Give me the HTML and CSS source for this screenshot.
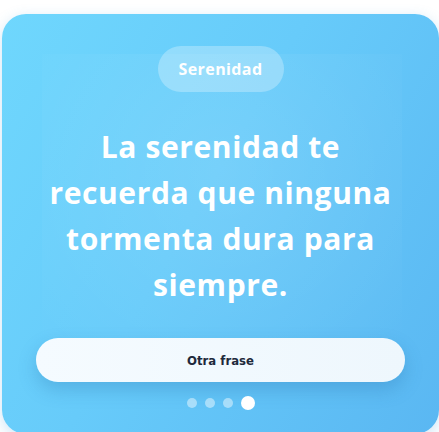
FILE: index.html
```html
<!DOCTYPE html>
<html lang="es">
<head>
<meta charset="utf-8">
<title>Serenidad</title>
<link rel="stylesheet" href="styles.css">
</head>
<body>
<main class="card">
  <div class="glow"></div>
  <span class="tag">Serenidad</span>
  <p class="quote">La serenidad te recuerda que ninguna tormenta dura para siempre.</p>
  <button class="next" type="button">Otra frase</button>
  <div class="dots">
    <span class="dot"></span>
    <span class="dot"></span>
    <span class="dot"></span>
    <span class="dot active"></span>
  </div>
</main>
</body>
</html>
```
FILE: styles.css
```css
html, body {
  margin: 0;
  padding: 0;
  background: #ffffff;
}
body {
  overflow: hidden;
  height: 432px;
}
.card {
  position: relative;
  box-sizing: border-box;
  margin: 14px 0 0 2px;
  width: 437px;
  height: 420px;
  border-radius: 24px;
  background: linear-gradient(120deg, #6fd7fd 0%, #67cbfa 45%, #5ab7f2 100%);
  box-shadow: 0 4px 14px rgba(60, 150, 220, 0.25);
  display: flex;
  flex-direction: column;
  align-items: center;
  padding-top: 32px;
  overflow: hidden;
}
.glow {
  position: absolute;
  left: 40px;
  top: 40px;
  width: 360px;
  height: 290px;
  background: radial-gradient(ellipse at 50% 40%, rgba(255,255,255,0.10), rgba(255,255,255,0.03) 70%, rgba(255,255,255,0) 100%);
  pointer-events: none;
}
.tag {
  position: relative;
  display: flex;
  align-items: center;
  justify-content: center;
  width: 126px;
  height: 46px;
  border-radius: 23px;
  background: rgba(255, 255, 255, 0.28);
  color: #ffffff;
  font-family: "Open Sans", "Noto Sans", sans-serif;
  font-weight: 700;
  font-size: 16px;
  letter-spacing: 0.4px;
}
.quote {
  position: relative;
  margin: 32px 0 0;
  width: 380px;
  text-align: center;
  color: #ffffff;
  font-family: "Open Sans", "Noto Sans", sans-serif;
  font-weight: 700;
  font-size: 30px;
  letter-spacing: 0.6px;
  line-height: 46px;
}
.next {
  position: relative;
  margin-top: 30px;
  width: 369px;
  height: 44px;
  border: none;
  border-radius: 22px;
  background: linear-gradient(90deg, #f5fbff, #eef7fd);
  color: #1e293b;
  font-family: "DejaVu Sans Condensed", "DejaVu Sans", sans-serif;
  font-weight: 700;
  font-size: 13px;
  box-shadow: 0 8px 18px rgba(40, 110, 170, 0.28);
  cursor: pointer;
}
.dots {
  position: relative;
  margin-top: 14px;
  display: flex;
  align-items: center;
  gap: 8px;
}
.dot {
  width: 10px;
  height: 10px;
  border-radius: 50%;
  background: rgba(255, 255, 255, 0.45);
}
.dot.active {
  width: 14px;
  height: 14px;
  background: #ffffff;
}
```
